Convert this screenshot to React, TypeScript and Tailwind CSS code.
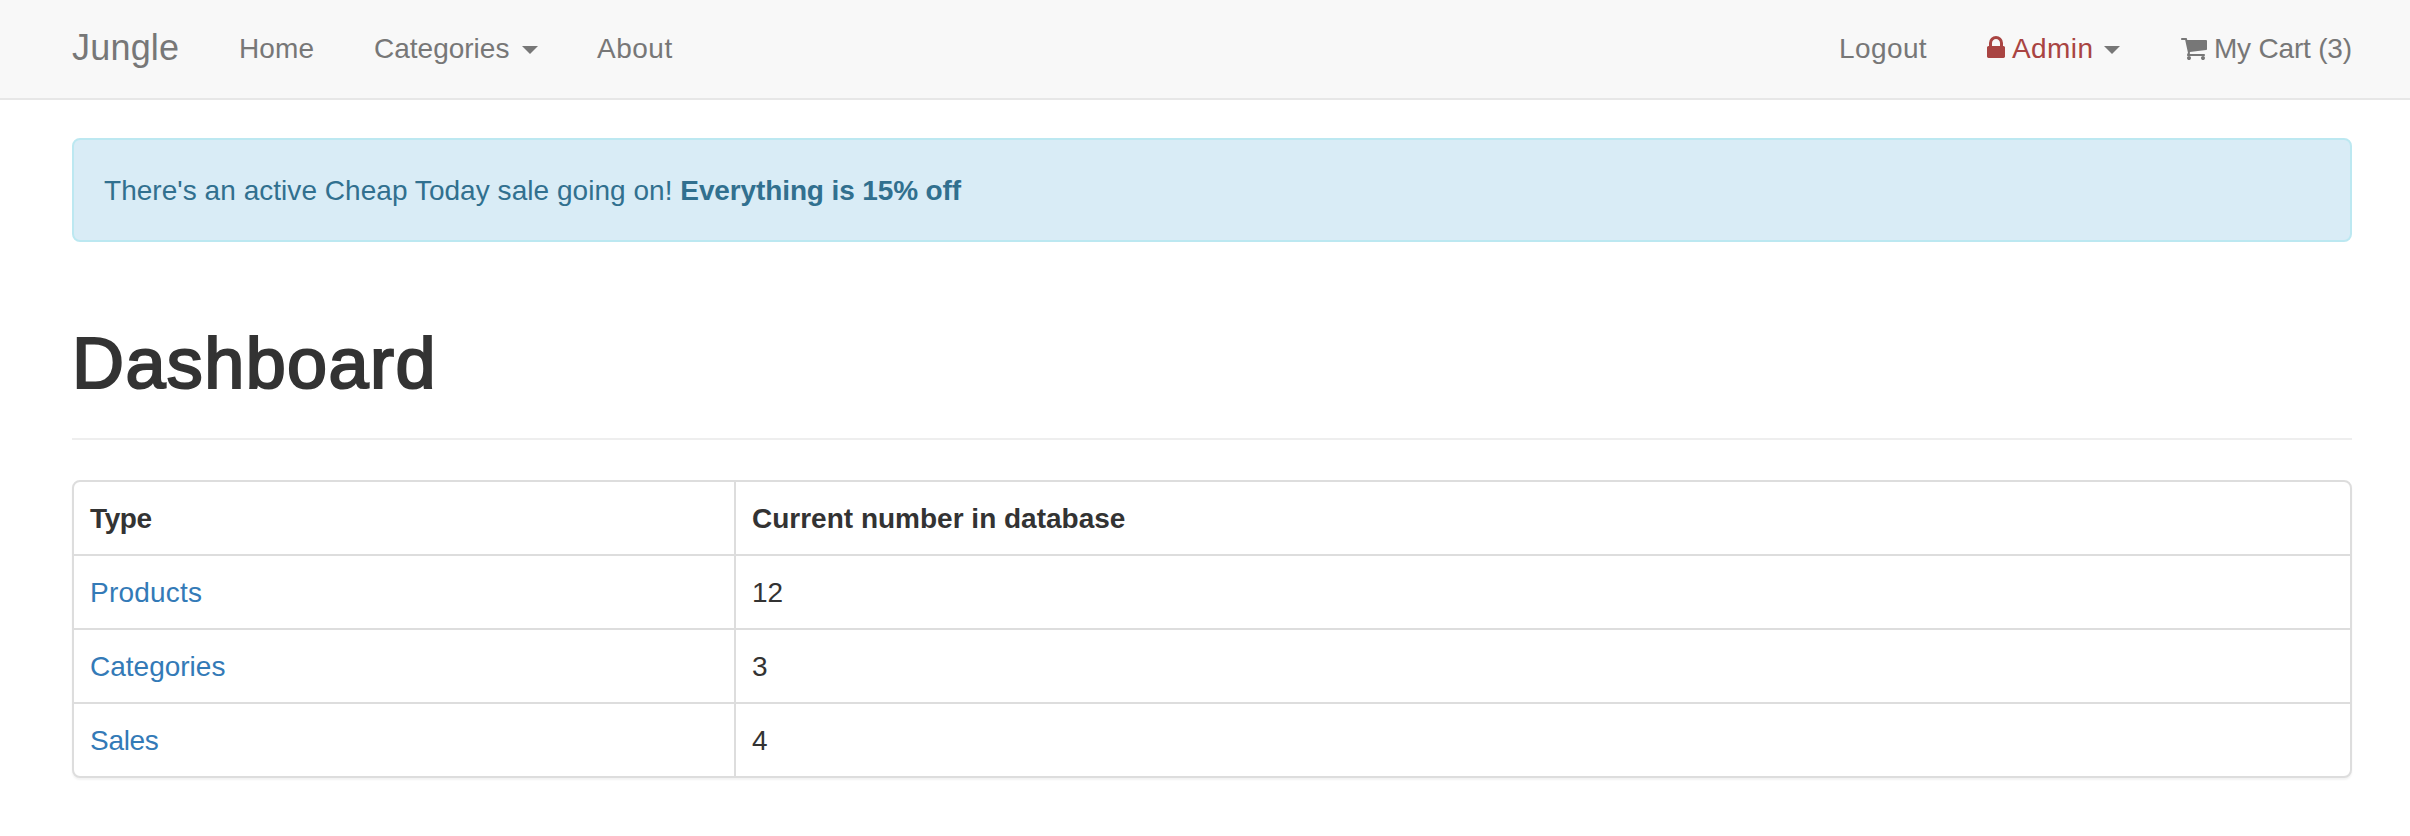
import type { ReactNode } from "react";

function Caret() {
  return (
    <svg className="mt-0.5 h-2 w-4 shrink-0 text-[#777]" viewBox="0 0 16 8" fill="currentColor" aria-hidden="true">
      <path d="M0 0h16L8 8z" />
    </svg>
  );
}

function LockIcon() {
  return (
    <svg className="mb-1 h-[22px] w-[18px] shrink-0" viewBox="320 128 1152 1408" fill="currentColor" aria-hidden="true">
      <path d="M640 768h512v-192q0-106-75-181t-181-75-181 75-75 181v192zm832 96v576q0 40-28 68t-68 28h-960q-40 0-68-28t-28-68v-576q0-40 28-68t68-28h32v-192q0-184 132-316t316-132 316 132 132 316v192h32q40 0 68 28t28 68z" />
    </svg>
  );
}

function CartIcon() {
  return (
    <svg className="h-[22px] w-[26px] shrink-0" viewBox="64 256 1664 1408" fill="currentColor" aria-hidden="true">
      <path d="M704 1536q0 52-38 90t-90 38-90-38-38-90 38-90 90-38 90 38 38 90zm896 0q0 52-38 90t-90 38-90-38-38-90 38-90 90-38 90 38 38 90zm128-1088v512q0 24-16.5 42.5t-40.5 21.5l-1044 122q13 60 13 70 0 16-24 64h920q26 0 45 19t19 45-19 45-45 19h-1024q-26 0-45-19t-19-45q0-11 8-31.5t16-36 21.5-40 15.5-29.5l-177-823h-204q-26 0-45-19t-19-45 19-45 45-19h256q16 0 28.5 6.5t19.5 15.5 13 24.5 8 26 5.5 29.5 4.5 26h1201q26 0 45 19t19 45z" />
    </svg>
  );
}

function Navbar() {
  return (
    <nav className="flex h-[100px] items-center justify-between whitespace-nowrap border-b-2 border-[#e7e7e7] bg-[#f8f8f8] pr-[58px] pl-[72px] text-[#777]">
      <div className="flex items-center">
        <a href="#" className="mb-0.5 w-[167px] text-[36px] leading-10 tracking-[0.2px]">Jungle</a>
        <a href="#" className="w-[135px] tracking-[0.13px]">Home</a>
        <a href="#" className="flex w-[223px] items-center">
          <span className="w-[148px]">Categories</span>
          <Caret />
        </a>
        <a href="#" className="tracking-[0.5px]">About</a>
      </div>
      <div className="flex items-center">
        <a href="#" className="w-[148px] tracking-[0.4px]">Logout</a>
        <a href="#" className="flex w-[194px] items-center text-[#a94442]">
          <LockIcon />
          <span className="ml-[7px] w-[92px] tracking-[0.4px]">Admin</span>
          <Caret />
        </a>
        <a href="#" className="flex items-center">
          <CartIcon />
          <span className="ml-[7px] w-[138px] tracking-[-0.2px]">My Cart (3)</span>
        </a>
      </div>
    </nav>
  );
}

function SaleAlert() {
  return (
    <div className="mt-[38px] rounded-lg border-2 border-[#bce8f1] bg-[#d9ecf6] px-[30px] pt-[31px] pb-[29px] tracking-[0.04px] text-[#31708f]">
      There's an active Cheap Today sale going on!{" "}
      <strong className="font-bold tracking-[-0.12px]">Everything is 15% off</strong>
    </div>
  );
}

const rows = [
  { type: "Products", count: 12, tracking: "tracking-[0.22px]" },
  { type: "Categories", count: 3, tracking: "tracking-normal" },
  { type: "Sales", count: 4, tracking: "tracking-[-0.3px]" },
];

function Row({ left, right }: { left: ReactNode; right: ReactNode }) {
  return (
    <div className="flex h-[74px] border-b-2 border-[#ddd] last:h-[72px] last:border-b-0">
      <div className="w-[662px] border-r-2 border-[#ddd] px-4 pt-[17px]">{left}</div>
      <div className="px-4 pt-[17px]">{right}</div>
    </div>
  );
}

export default function App() {
  return (
    <div className="min-h-[836px] bg-white font-['Liberation_Sans',Arial,sans-serif] text-[28px] leading-10 text-[#333]">
      <Navbar />
      <main className="pr-[58px] pl-[72px]">
        <SaleAlert />
        <header className="mt-[82px] border-b-2 border-[#eee] pb-9">
          <h1 className="text-[72px] leading-[78px] tracking-[1.4px] [-webkit-text-stroke:2.2px_#333]">Dashboard</h1>
        </header>
        <section className="mt-10 rounded-lg border-2 border-[#ddd] bg-white shadow-[0_2px_2px_rgba(0,0,0,0.05)]">
          <Row
            left={<b className="font-bold tracking-[-0.4px]">Type</b>}
            right={<b className="font-bold">Current number in database</b>}
          />
          {rows.map((row) => (
            <Row
              key={row.type}
              left={<a href="#" className={`text-[#337ab7] ${row.tracking}`}>{row.type}</a>}
              right={row.count}
            />
          ))}
        </section>
      </main>
    </div>
  );
}
